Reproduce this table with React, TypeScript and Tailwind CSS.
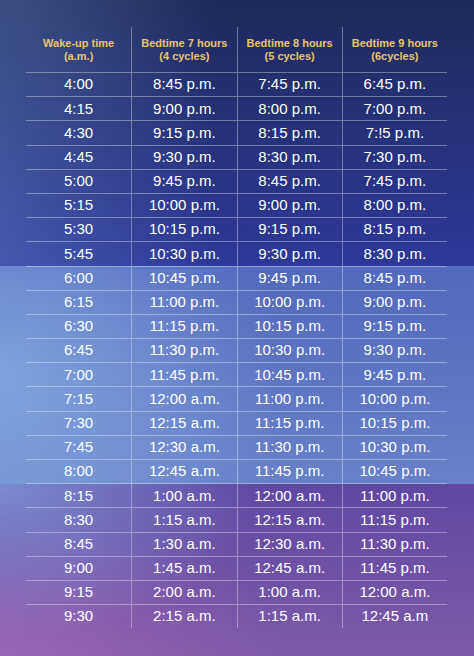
const rows: [string, string, string, string][] = [
  ["4:00", "8:45 p.m.", "7:45 p.m.", "6:45 p.m."],
  ["4:15", "9:00 p.m.", "8:00 p.m.", "7:00 p.m."],
  ["4:30", "9:15 p.m.", "8:15 p.m.", "7:!5 p.m."],
  ["4:45", "9:30 p.m.", "8:30 p.m.", "7:30 p.m."],
  ["5:00", "9:45 p.m.", "8:45 p.m.", "7:45 p.m."],
  ["5:15", "10:00 p.m.", "9:00 p.m.", "8:00 p.m."],
  ["5:30", "10:15 p.m.", "9:15 p.m.", "8:15 p.m."],
  ["5:45", "10:30 p.m.", "9:30 p.m.", "8:30 p.m."],
  ["6:00", "10:45 p.m.", "9:45 p.m.", "8:45 p.m."],
  ["6:15", "11:00 p.m.", "10:00 p.m.", "9:00 p.m."],
  ["6:30", "11:15 p.m.", "10:15 p.m.", "9:15 p.m."],
  ["6:45", "11:30 p.m.", "10:30 p.m.", "9:30 p.m."],
  ["7:00", "11:45 p.m.", "10:45 p.m.", "9:45 p.m."],
  ["7:15", "12:00 a.m.", "11:00 p.m.", "10:00 p.m."],
  ["7:30", "12:15 a.m.", "11:15 p.m.", "10:15 p.m."],
  ["7:45", "12:30 a.m.", "11:30 p.m.", "10:30 p.m."],
  ["8:00", "12:45 a.m.", "11:45 p.m.", "10:45 p.m."],
  ["8:15", "1:00 a.m.", "12:00 a.m.", "11:00 p.m."],
  ["8:30", "1:15 a.m.", "12:15 a.m.", "11:15 p.m."],
  ["8:45", "1:30 a.m.", "12:30 a.m.", "11:30 p.m."],
  ["9:00", "1:45 a.m.", "12:45 a.m.", "11:45 p.m."],
  ["9:15", "2:00 a.m.", "1:00 a.m.", "12:00 a.m."],
  ["9:30", "2:15 a.m.", "1:15 a.m.", "12:45 a.m"],
];

const headers = [
  ["Wake-up time", "(a.m.)"],
  ["Bedtime 7 hours", "(4 cycles)"],
  ["Bedtime 8 hours", "(5 cycles)"],
  ["Bedtime 9 hours", "(6cycles)"],
];

export default function App() {
  return (
    <div
      className="w-[474px] h-[656px] overflow-hidden pt-[27px] pl-[26px] bg-no-repeat bg-[image:linear-gradient(90deg,rgba(140,180,240,0.26),rgba(140,180,240,0)_45%),linear-gradient(180deg,#1f2a5c,#2e3898),radial-gradient(ellipse_60%_120%_at_0_50%,rgba(150,205,245,0.55),rgba(150,205,245,0)),linear-gradient(180deg,#5468bc,#6a80c8),radial-gradient(ellipse_55%_90%_at_0_0,rgba(135,160,225,0.75),rgba(135,160,225,0)),radial-gradient(ellipse_60%_80%_at_0_100%,rgba(175,110,190,0.6),rgba(175,110,190,0)),linear-gradient(180deg,#5f48a2,#7c5aa8)] bg-[length:100%_266px,100%_266px,100%_218px,100%_218px,100%_172px,100%_172px,100%_172px] bg-[position:0_0,0_0,0_266px,0_266px,0_484px,0_484px,0_484px]"
      style={{ fontFamily: '"Liberation Sans", Arial, sans-serif' }}
    >
      <div className="w-[421px] grid grid-cols-4">
        {headers.map(([a, b], i) => (
          <div
            key={a}
            className={`h-[45px] flex flex-col items-center justify-center text-[11px] leading-[13px] font-bold text-[#e8c46e] ${
              i > 0 ? "border-l border-white/35" : ""
            }`}
          >
            <span>{a}</span>
            <span>{b}</span>
          </div>
        ))}
        {rows.map((r) =>
          r.map((c, i) => (
            <div
              key={r[0] + i}
              className={`h-[24.2px] flex items-center justify-center border-t border-white/35 text-[15px] text-white ${
                i > 0 ? "border-l" : ""
              }`}
            >
              {c}
            </div>
          ))
        )}
      </div>
    </div>
  );
}
